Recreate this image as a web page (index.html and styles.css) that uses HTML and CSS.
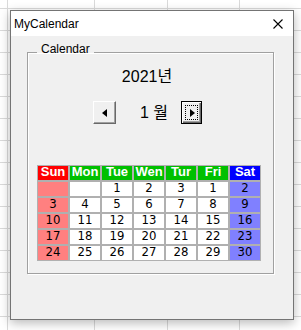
FILE: index.html
```html
<!DOCTYPE html>
<html>
<head>
    <title>MyCalendar</title>
    <link rel="stylesheet" href="styles.css">
</head>
<body>
    <div class="window">
        <div class="titlebar">
            <span class="title">MyCalendar</span>
            <svg class="close" width="10" height="10" viewBox="0 0 10 10">
                <path d="M0.5 0.5 L9.5 9.5 M9.5 0.5 L0.5 9.5" stroke="#000" stroke-width="1.1" fill="none"/>
            </svg>
        </div>
        <div class="client">
            <fieldset class="group">
                <legend>Calendar</legend>
                <div class="year">2021년</div>
                <div class="nav">
                    <button class="navbtn prev">
                        <svg width="8" height="8" viewBox="0 0 8 8"><polygon points="6,0 6,8 1,4" fill="#000"/></svg>
                    </button>
                    <span class="month">1 월</span>
                    <button class="navbtn next">
                        <svg width="8" height="8" viewBox="0 0 8 8"><polygon points="2,0 2,8 7,4" fill="#000"/></svg>
                    </button>
                </div>
                <table class="cal">
                    <tr>
                        <th class="sun">Sun</th><th>Mon</th><th>Tue</th><th>Wen</th><th>Tur</th><th>Fri</th><th class="sat">Sat</th>
                    </tr>
                    <tr>
                        <td class="sun"></td><td></td><td>1</td><td>2</td><td>3</td><td>1</td><td class="sat">2</td>
                    </tr>
                    <tr>
                        <td class="sun">3</td><td>4</td><td>5</td><td>6</td><td>7</td><td>8</td><td class="sat">9</td>
                    </tr>
                    <tr>
                        <td class="sun">10</td><td>11</td><td>12</td><td>13</td><td>14</td><td>15</td><td class="sat">16</td>
                    </tr>
                    <tr>
                        <td class="sun">17</td><td>18</td><td>19</td><td>20</td><td>21</td><td>22</td><td class="sat">23</td>
                    </tr>
                    <tr>
                        <td class="sun">24</td><td>25</td><td>26</td><td>27</td><td>28</td><td>29</td><td class="sat">30</td>
                    </tr>
                </table>
            </fieldset>
        </div>
    </div>
</body>
</html>
```

FILE: styles.css
```css
html, body {
    margin: 0;
    height: 330px;
    overflow: hidden;
}
body {
    font-family: "Liberation Sans", "Noto Sans CJK KR", sans-serif;
    background-color: #fff;
    background-image:
        linear-gradient(#dadada, #dadada),
        linear-gradient(#dadada, #dadada),
        linear-gradient(#dadada, #dadada),
        linear-gradient(#dadada, #dadada),
        repeating-linear-gradient(to bottom, transparent 0, transparent 8px, #dadada 8px, #dadada 9px, transparent 9px, transparent 22px);
    background-size: 1px 100%, 1px 100%, 1px 100%, 1px 100%, 100% 100%;
    background-position: 7px 0, 94px 0, 167px 0, 239px 0, 0 0;
    background-repeat: no-repeat;
    padding-top: 10px;
    box-sizing: border-box;
}
.window {
    margin-left: 10px;
    width: 282px;
    height: 308px;
    border: 1px solid #747474;
    background-color: #f0f0f0;
    box-shadow: 0 3px 10px rgba(0,0,0,0.28);
    display: flex;
    flex-direction: column;
}
.titlebar {
    height: 25px;
    background-color: #fff;
    display: flex;
    align-items: center;
    padding-left: 3px;
    flex-shrink: 0;
}
.title {
    font-size: 12px;
    color: #000;
}
.close {
    margin-left: auto;
    margin-right: 10px;
}
.client {
    padding: 6px 19px 0 16px;
}
.group {
    margin: 0;
    padding: 0;
    min-width: 0;
    height: 232px;
    box-sizing: border-box;
    border: 1px solid #a0a0a0;
    box-shadow: inset 1px 1px #fff, 1px 1px #fff;
}
.group legend {
    margin-left: 9px;
    padding: 0 4px 6px;
    font-size: 12px;
    line-height: 14px;
    color: #000;
}
.year {
    margin-top: 5px;
    height: 20px;
    line-height: 20px;
    font-size: 16px;
    text-align: center;
    padding-right: 7px;
}
.nav {
    margin-top: 14px;
    height: 23px;
    display: flex;
    padding-left: 65px;
}
.navbtn {
    width: 23px;
    height: 23px;
    padding: 0;
    margin: 0;
    background-color: #f0f0f0;
    border: 1px solid;
    border-color: #fff #696969 #696969 #fff;
    box-shadow: inset -1px -1px #a0a0a0;
    display: flex;
    align-items: center;
    justify-content: center;
}
.navbtn.next {
    width: 21px;
    border-color: #000;
    box-shadow: inset 1px 1px #fff, inset -1px -1px #696969, inset -2px -2px #a0a0a0;
    outline: 1px dotted #000;
    outline-offset: -5px;
}
.month {
    width: 41px;
    padding-left: 24px;
    line-height: 23px;
    font-size: 16px;
}
.cal {
    margin-top: 41px;
    margin-left: 9px;
    border-collapse: separate;
    border-spacing: 0;
    table-layout: fixed;
    width: 224px;
}
.cal th, .cal td {
    width: 30px;
    height: 14px;
    padding: 0;
    border: 1px solid #b0b0b0;
    text-align: center;
    vertical-align: top;
    line-height: 11px;
    font-size: 13px;
    overflow: hidden;
}
.cal th {
    background-color: #00c000;
    color: #fff;
    font-weight: bold;
}
.cal td {
    background-color: #fff;
    color: #000;
    font-family: "Liberation Sans Narrow", "DejaVu Sans Condensed", "Liberation Sans", sans-serif;
}
.cal th.sun {
    background-color: #ff0000;
}
.cal th.sat {
    background-color: #0000ff;
}
.cal td.sun {
    background-color: #ff8080;
}
.cal td.sat {
    background-color: #8080ff;
}
```
